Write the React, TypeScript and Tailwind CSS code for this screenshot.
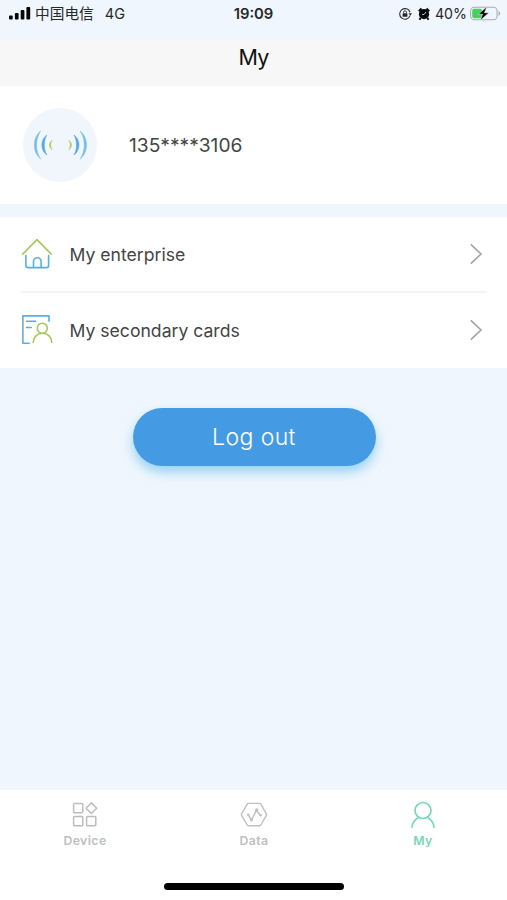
import type { ReactNode } from 'react'

const tabs = [
  { label: 'Device', icon: <DeviceIcon />, active: false },
  { label: 'Data', icon: <DataIcon />, active: false },
  { label: 'My', icon: <UserIcon />, active: true },
]

function StatusBar() {
  return (
    <div className="grid h-10 grid-cols-3 items-start bg-[#f0f6fd] pt-[4px] text-[#26282c]">
      <div className="flex h-5 items-center pl-[9px]">
        <svg width="22" height="14" viewBox="0 0 22 14" fill="#050608">
          <rect x="0" y="8.4" width="3.7" height="4" rx="1" />
          <rect x="5.9" y="6" width="3.7" height="6.4" rx="1" />
          <rect x="11.7" y="3" width="3.7" height="9.4" rx="1" />
          <rect x="17.4" y="0" width="3.8" height="12.4" rx="1" />
        </svg>
        <span className="ml-[4px] text-[14.7px] leading-5 whitespace-nowrap">中国电信</span>
        <span className="ml-[11px] text-[14.5px] leading-5">4G</span>
      </div>
      <div className="text-center text-[14.8px] leading-5 font-semibold">19:09</div>
      <div className="flex h-5 items-center justify-end pr-[6px]">
        <svg width="14" height="14" viewBox="0 0 14 14" fill="none" stroke="#26282c" strokeWidth="1.1">
          <path d="M12 8.6A5.300 5.300 0 1 1 12 5.200" />
          <path d="M10.600 6.300h3.300l-1.600 2.400z" fill="#26282c" stroke="none" />
          <rect x="4.600" y="6.300" width="4.800" height="3.500" rx=".6" fill="#26282c" stroke="none" />
          <path d="M5.500 6.400V5.300a1.500 1.500 0 0 1 3 0v1.100" strokeWidth=".9" />
        </svg>
        <svg className="ml-[6px]" width="12" height="14" viewBox="0 0 12 14">
          <circle cx="6" cy="7.200" r="5.100" fill="#08090b" />
          <path d="M.8 4.200 3.500 1.500M11.200 4.200 8.500 1.500M2.500 11l-1 1.800M9.500 11l1 1.800" stroke="#08090b" strokeWidth="2" />
          <path d="M6 7.500 8 5M6 7.500H4.200" stroke="#f0f6fd" strokeWidth=".8" fill="none" />
        </svg>
        <span className="ml-[5px] text-[14.2px] leading-5">40%</span>
        <svg className="ml-[3px]" width="31" height="16" viewBox="0 0 31 16">
          <rect x=".6" y="1.200" width="26.500" height="12.600" rx="3.800" fill="none" stroke="#a7adb2" strokeWidth="1.100" />
          <path d="M28.600 5.100c2 .8 2 4 0 4.800z" fill="#a7adb2" />
          <rect x="2.200" y="2.800" width="10" height="9.400" rx="2" fill="#43d25f" />
          <path d="M17 .6 8.200 8.300h4.300L10.200 14.500 19 6.700h-4.500z" fill="#08090b" stroke="#f0f6fd" strokeWidth=".6" />
        </svg>
      </div>
    </div>
  )
}

function Avatar() {
  return (
    <div className="flex size-[74px] items-center justify-center rounded-full bg-[#f0f6fc]">
      <svg width="56" height="32" viewBox="0 0 56 32">
        <path d="M8.6 2C.2 9 .2 23 8.6 30 3.2 22 3.2 10 8.6 2z" fill="#74bde9" stroke="#74bde9" strokeWidth=".5" />
        <path d="M14.8 6C8.200 11 8.200 21 14.800 26 11.400 20 11.400 12 14.800 6z" fill="#55a8e0" stroke="#55a8e0" strokeWidth=".6" />
        <path d="M20.300 11c-4 3-4 7 0 10-2-3-2-7 0-10z" fill="#b4cc55" stroke="#b4cc55" strokeWidth=".4" />
        <path d="M36.600 11c4 3 4 7 0 10 2-3 2-7 0-10z" fill="#b4cc55" stroke="#b4cc55" strokeWidth=".4" />
        <path d="M42 6c6.600 5 6.600 15 0 20 3.400-6 3.400-14 0-20z" fill="#55a8e0" stroke="#55a8e0" strokeWidth=".6" />
        <path d="M48.200 2c8.400 7 8.400 21 0 28 5.400-8 5.400-20 0-28z" fill="#74bde9" stroke="#74bde9" strokeWidth=".5" />
      </svg>
    </div>
  )
}

function HouseIcon() {
  return (
    <svg width="32" height="32" viewBox="0 0 32 32" fill="none" strokeWidth="1.6" strokeLinecap="round" strokeLinejoin="round">
      <path d="M1.7 16.1 16 1.6l14.300 14.500" stroke="#a9c85a" />
      <path d="M4.900 17.600v9.800q0 2.200 2.200 2.200h18.300q2.200 0 2.200-2.200v-9.800" stroke="#5aaee3" />
      <path d="M12.500 29.500v-6a3.800 3.800 0 0 1 7.600 0v6" stroke="#5aaee3" />
    </svg>
  )
}

function CardIcon() {
  return (
    <svg width="32" height="32" viewBox="0 0 32 32" fill="none" strokeWidth="1.6" strokeLinecap="round" strokeLinejoin="round">
      <path d="M8.200 29.300H1.900V1.900H28v5.300M5.500 7.300h9.200M5.500 13.500h4.800" stroke="#5aaee3" />
      <circle cx="21.300" cy="14.200" r="5" stroke="#a9c85a" />
      <path d="M12.200 28.500c0-5.300 4-9.200 9.300-9.200s9.300 3.900 9.300 9.200" stroke="#a9c85a" />
    </svg>
  )
}

function DeviceIcon() {
  return (
    <svg width="28" height="28" viewBox="0 0 28 28" fill="none" stroke="#bcbcbc" strokeWidth="1.5" strokeLinejoin="round">
      <rect x="2.6" y="2.6" width="9.2" height="9.2" rx="1" />
      <rect x="2.6" y="15.6" width="9.2" height="9.2" rx="1" />
      <rect x="15.6" y="15.6" width="9.2" height="9.2" rx="1" />
      <path d="M20.4 1.9 25.7 7.2 20.4 12.5 15.1 7.2z" />
    </svg>
  )
}

function DataIcon() {
  return (
    <svg width="28" height="28" viewBox="0 0 28 28" fill="none" stroke="#c0c0c0" strokeWidth="1.4" strokeLinejoin="round">
      <path d="M8.3 2.4h11.4q.7 0 1.100.7l5.600 9.800q.4.700 0 1.400l-5.600 9.700q-.4.700-1.100.7H8.300q-.7 0-1.100-.7l-5.600-9.700q-.4-.7 0-1.400l5.600-9.800q.4-.7 1.100-.7z" />
      <path d="m8.200 13.800 3.300 5.200 4.800-9.600 4.200 4.800" strokeWidth="1.500" />
      <g fill="#c0c0c0" stroke="none">
        <circle cx="8.2" cy="13.8" r="1.3" />
        <circle cx="11.5" cy="19" r="1.5" />
        <circle cx="16.7" cy="9" r="1.7" />
        <circle cx="20.5" cy="14.2" r="1.3" />
      </g>
    </svg>
  )
}

function UserIcon() {
  return (
    <svg width="28" height="28" viewBox="0 0 28 28" fill="none" stroke="#73d9b9" strokeWidth="1.7">
      <circle cx="14" cy="9.5" r="8" />
      <path d="M2.900 26.700c.4-4.600 2.700-8 6.200-9.900M25.100 26.700c-.4-4.600-2.700-8-6.200-9.900" />
    </svg>
  )
}

function MenuRow({ icon, label }: { icon: ReactNode; label: string }) {
  return (
    <div className="flex h-[74px] items-center pr-[24px] pl-[21px]">
      {icon}
      <span className="ml-[16.5px] flex-1 pt-px text-[17.6px] leading-6 text-[#444]">{label}</span>
      <svg className="mb-px" width="14" height="22" viewBox="0 0 14 22" fill="none" stroke="#a3a3a3" strokeWidth="1.6">
        <path d="M1.800 1.300 12 11 1.800 20.700" />
      </svg>
    </div>
  )
}

export default function App() {
  return (
    <div className="flex h-[900px] w-full flex-col bg-[#f0f6fd] font-['Inter','Noto_Sans_CJK_SC',sans-serif]">
      <StatusBar />
      <header className="h-[46px] bg-[#f7f7f7] pt-[2px] text-center text-[21.5px] leading-[31px] tracking-[-0.7px] text-[#111]">
        My
      </header>

      <section className="flex h-[118px] items-center bg-white pl-[23px]">
        <Avatar />
        <span className="ml-[32px] text-[19.2px] text-[#444]">135****3106</span>
      </section>

      <section className="mt-[13px] h-[151px] bg-white">
        <MenuRow icon={<HouseIcon />} label="My enterprise" />
        <div className="mx-5 h-[2px] bg-[#f5f5f5]" />
        <MenuRow icon={<CardIcon />} label="My secondary cards" />
      </section>

      <button className="mt-[40px] ml-px h-[58px] w-[243px] self-center rounded-full bg-[#459be3] text-[23px] font-light tracking-[0.4px] text-white shadow-[0_6px_12px_rgba(90,185,235,0.6)]">
        Log out
      </button>

      <nav className="mt-auto flex h-[110px] flex-col items-center bg-white">
        <div className="grid w-full grid-cols-3 pt-[11px]">
          {tabs.map((tab) => (
            <div key={tab.label} className="flex flex-col items-center">
              {tab.icon}
              <span
                className={`mt-[3px] pl-px text-[12.3px] leading-[18px] font-semibold tracking-[0.4px] ${tab.active ? 'text-[#73d9b9]' : 'text-[#c0c0c0]'}`}
              >
                {tab.label}
              </span>
            </div>
          ))}
        </div>
        <div className="mt-auto mb-[10px] ml-px h-[7px] w-[180px] rounded-full bg-black" />
      </nav>
    </div>
  )
}
